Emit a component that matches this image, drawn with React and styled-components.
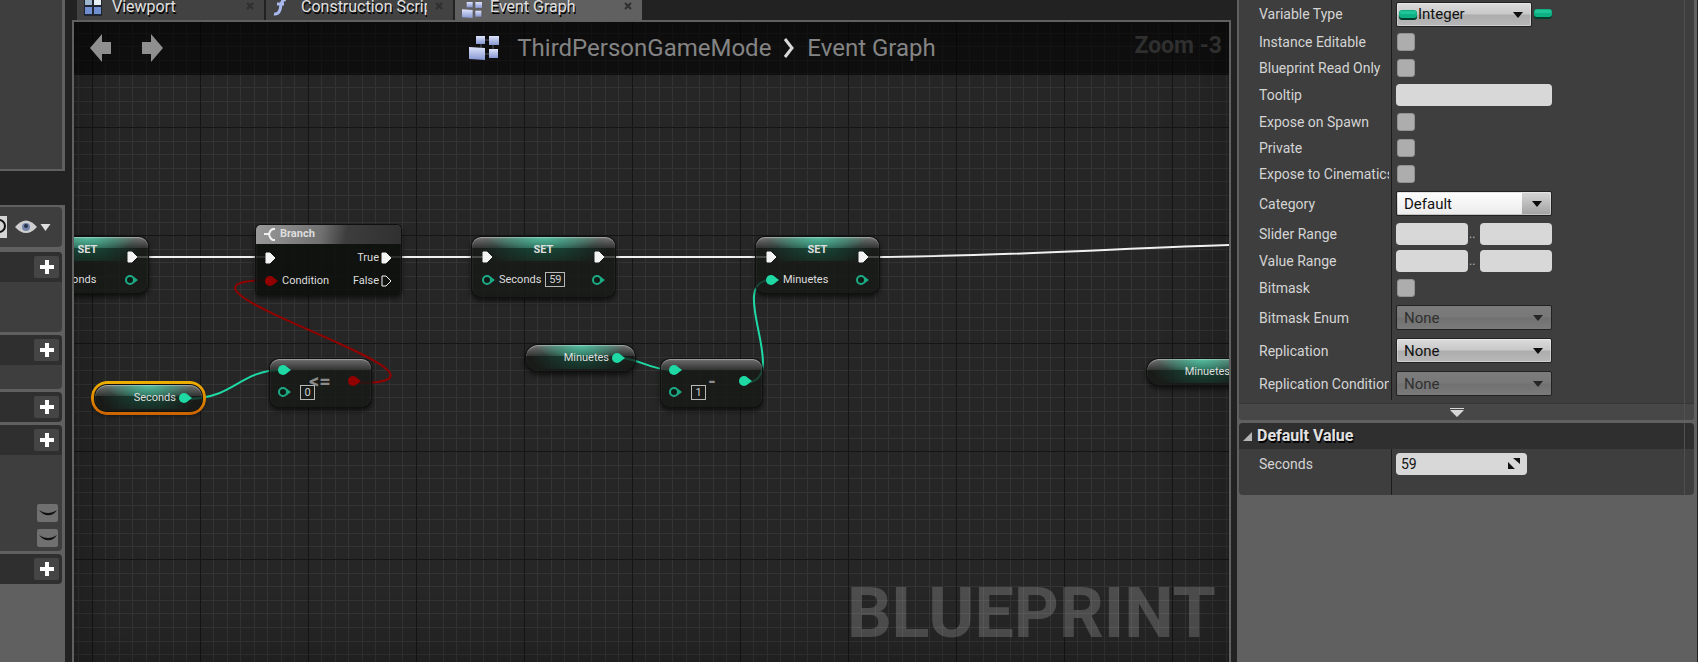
import React from "react";
import styled, { createGlobalStyle, css } from "styled-components";

const TEAL = "#1fd9a5";
const RED = "#920000";

const GlobalStyle = createGlobalStyle`
  *, *::before, *::after { box-sizing: border-box; }
  body {
    margin: 0;
    background: #222;
    font-family: Roboto, "Liberation Sans", sans-serif;
    overflow: hidden;
  }
  button, input, select { font: inherit; margin: 0; padding: 0; border: 0; outline: none; }
`;

const Editor = styled.div`
  display: flex;
  gap: 6px;
  height: 100vh;
  padding-right: 1px;
`;

/* ---------- left: variable / function list ---------- */

const Sidebar = styled.aside`
  flex: 0 0 65px;
  margin-right: 1px;
  display: flex;
  flex-direction: column;
  gap: 34px;
`;

const PreviewPane = styled.section`
  height: 171px;
  flex: none;
  border: solid #606060;
  border-width: 0 3px 2px 0;
  background: #3e3e3e;
`;

const ListPane = styled.section`
  flex: 1;
  padding: 2px 3px 0 0;
  background: #606060;
  display: flex;
  flex-direction: column;
  gap: 3px;
`;

const ListToolbar = styled.div`
  height: 40px;
  margin-bottom: 2px;
  flex: none;
  display: flex;
  align-items: center;
  background: #3e3e3e;
  border-radius: 0 4px 4px 0;
`;

const SearchCap = styled.button`
  width: 7px;
  height: 22px;
  margin-right: 8px;
  background: #d4d4d4;
  display: flex;
`;

const EyeButton = styled.button`
  background: none;
  display: flex;
  align-items: center;
  gap: 3px;
`;

const Group = styled.div`
  flex: none;
  background: #3e3e3e;
  border-radius: 0 4px 4px 0;
  overflow: hidden;
`;

const GroupHeader = styled.div`
  height: 30px;
  padding: 0 3px 1px 0;
  display: flex;
  align-items: center;
  justify-content: flex-end;
  background: #2f2f2f;
`;

const GroupBody = styled.div`
  height: ${(p) => p.$h}px;
  padding: 0 4px 4px 0;
  display: flex;
  flex-direction: column;
  justify-content: flex-end;
  align-items: flex-end;
  gap: 7px;
`;

const AddButton = styled.button`
  width: 25px;
  height: 22px;
  display: grid;
  place-items: center;
  background: #454545;
  border-radius: 2px;
`;

const LidButton = styled.button`
  width: 21px;
  height: 18px;
  display: grid;
  place-items: center;
  background: #707070;
  border-radius: 2px;
`;

/* ---------- centre: tabs and graph ---------- */

const GraphColumn = styled.main`
  flex: 1;
  min-width: 0;
  display: flex;
  flex-direction: column;
`;

const TabStrip = styled.nav`
  height: 20px;
  flex: none;
  padding-left: 5px;
  display: flex;
  gap: 2px;
  overflow: hidden;
`;

const Tab = styled.button`
  width: 187px;
  height: 20px;
  padding: 0 10px 0 7px;
  display: flex;
  align-items: center;
  gap: 8px;
  background: ${(p) => (p.$active ? "#606060" : "#424242")};
  color: #e0e0e0;
  font-size: 16px;
  text-align: left;
  text-shadow: 1px 2px 0 #000;
  svg { flex: none; }
`;

const TabLabel = styled.span`
  flex: 1;
  height: 20px;
  line-height: 14px;
  overflow: hidden;
  white-space: nowrap;
`;

const Canvas = styled.div`
  position: relative;
  flex: 1;
  overflow: hidden;
  border: 2px solid #606060;
  border-bottom: 0;
  background-color: #262626;
  background-image:
    linear-gradient(90deg, #151515 1px, transparent 1px),
    linear-gradient(#151515 1px, transparent 1px),
    linear-gradient(90deg, transparent 13px, #343434 13px 14px, transparent 14px 27px, #343434 27px 28px,
      transparent 28px 40px, #343434 40px 41px, transparent 41px 54px, #343434 54px 55px, transparent 55px 67px,
      #343434 67px 68px, transparent 68px 81px, #343434 81px 82px, transparent 82px 94px, #343434 94px 95px, transparent 95px),
    linear-gradient(transparent 14px, #343434 14px 15px, transparent 15px 27px, #343434 27px 28px,
      transparent 28px 41px, #343434 41px 42px, transparent 42px 54px, #343434 54px 55px, transparent 55px 68px,
      #343434 68px 69px, transparent 69px 82px, #343434 82px 83px, transparent 83px 95px, #343434 95px 96px, transparent 96px);
  background-size: 108px 108px;
  background-position: 18px 105px;
`;

const Vignette = styled.div`
  position: absolute;
  inset: 0;
  pointer-events: none;
  box-shadow: inset 0 0 60px rgba(0, 0, 0, 0.35);
`;

const TitleBar = styled.header`
  position: absolute;
  inset: 0 0 auto 0;
  height: 53px;
  padding: 0 7px 2px 16px;
  display: flex;
  align-items: center;
  background: rgba(0, 0, 0, 0.6);
`;

const History = styled.div`
  display: flex;
  gap: 31px;
  button { background: none; display: flex; }
`;

const Crumbs = styled.div`
  flex: 1;
  padding-left: 20px;
  display: flex;
  align-items: center;
  justify-content: center;
  gap: 12px;
  font-size: 24px;
  line-height: 28px;
  color: #848484;
`;

const CrumbLink = styled.a`
  color: inherit;
  text-decoration: none;
`;

const CrumbIcon = styled.span`
  display: flex;
  margin-right: 6px;
`;

const ZoomLabel = styled.div`
  position: absolute;
  right: 7px;
  top: 10px;
  font-size: 23px;
  line-height: 28px;
  font-weight: 700;
  color: #2f2f2f;
`;

const Watermark = styled.div`
  position: absolute;
  right: 13px;
  bottom: 8px;
  font-size: 70px;
  line-height: 82px;
  font-weight: 700;
  color: rgba(255, 255, 255, 0.18);
`;

const Wires = styled.svg`
  position: absolute;
  inset: 0;
  width: 100%;
  height: 100%;
`;

const tealGloss = css`
  background:
    radial-gradient(ellipse 40% 160% at 50% 0, rgba(85, 205, 170, 0.85), transparent) 0 0 / 100% 11px no-repeat,
    radial-gradient(ellipse 45% 100% at 50% 40%, rgba(22, 95, 72, 0.7), transparent) 0 0 / 100% 24px no-repeat,
    linear-gradient(rgba(140, 140, 140, 0.8), rgba(60, 60, 60, 0.7)) 0 0 / 100% 11px no-repeat,
    rgba(22, 24, 22, 0.78);
`;

const greyGloss = css`
  background:
    linear-gradient(rgba(130, 130, 130, 0.8), rgba(60, 60, 60, 0.7)) 0 0 / 100% 11px no-repeat,
    rgba(22, 24, 22, 0.78);
`;

const Node = styled.article`
  position: absolute;
  left: ${(p) => p.$x}px;
  top: ${(p) => p.$y}px;
  width: ${(p) => p.$w}px;
  height: ${(p) => p.$h}px;
  border-radius: ${(p) => (p.$pill ? 12 : 9)}px;
  ${(p) => (p.$teal ? tealGloss : greyGloss)}
  box-shadow: 0 0 0 1px #101010, inset 0 1px 1px rgba(255, 255, 255, 0.35), 0 3px 5px 1px rgba(0, 0, 0, 0.6);
  color: #dedede;
  font-size: 11px;
  line-height: 14px;
  ${(p) =>
    p.$selected &&
    css`
      &::before {
        content: "";
        position: absolute;
        inset: -4px;
        padding: 3px;
        border-radius: 16px;
        background: linear-gradient(#eeb000, #cc6200);
        mask: linear-gradient(#000 0 0) content-box exclude, linear-gradient(#000 0 0);
      }
    `}
`;

const BranchNode = styled(Node)`
  border-radius: 5px;
  overflow: hidden;
  background: rgba(14, 16, 12, 0.88);
`;

const BranchHeader = styled.div`
  height: 19px;
  margin-bottom: 2px;
  padding: 0 8px 1px;
  display: flex;
  align-items: center;
  gap: 4px;
  background: linear-gradient(100deg, #9a9a9a 0, #707070 45%, #3d3d3d 62%, #303030);
  font-weight: 700;
`;

const NodeTitle = styled.div`
  padding-top: 6px;
  margin-bottom: -12px;
  text-align: center;
  font-weight: 700;
`;

const PinRow = styled.div`
  display: flex;
  align-items: center;
  justify-content: space-between;
  height: 23px;
  padding: 0 ${(p) => p.$pad || 10}px;
`;

const PinGroup = styled.span`
  display: flex;
  align-items: center;
  gap: ${(p) => (p.$tight ? 2 : 4)}px;
  svg { flex: none; }
`;

const ValueBox = styled.input`
  width: ${(p) => p.$w}px;
  height: 15px;
  border: 1px solid #b8b8b8;
  background: transparent;
  color: #d0d0d0;
  text-align: center;
`;

const GetterBody = styled.div`
  height: 100%;
  padding-right: 10px;
  display: flex;
  align-items: center;
  justify-content: flex-end;
  gap: 3px;
  svg { flex: none; }
`;

const MathBody = styled.div`
  height: 100%;
  padding: 0 10px 4px 8px;
  display: flex;
  align-items: center;
  justify-content: space-between;
`;

const MathInputs = styled.div`
  width: 37px;
  height: 44px;
  display: flex;
  flex-direction: column;
`;

const MathRow = styled.div`
  height: 22px;
  display: flex;
  align-items: center;
  justify-content: space-between;
`;

const Operator = styled.span`
  flex: 1;
  margin-left: ${(p) => (p.$wide ? -6 : 2)}px;
  font-size: 20px;
  line-height: 24px;
  font-weight: 700;
  color: #8b8b8b;
  white-space: nowrap;
`;

/* ---------- right: details ---------- */

const Details = styled.aside`
  flex: 0 0 460px;
  padding: 0 3px 0 2px;
  background: #606060;
`;

const Card = styled.section`
  position: relative;
  background: #3e3e3e;
  border-radius: ${(p) => (p.$first ? "0 0 4px 4px" : "4px")};
  margin-bottom: 3px;
  overflow: hidden;
  &::after {
    content: "";
    position: absolute;
    top: 0;
    bottom: 0;
    right: 9px;
    width: 1px;
    background: #505050;
  }
`;

const Field = styled.div`
  display: grid;
  grid-template-columns: 152px 1fr;
  height: ${(p) => p.$h || 26}px;
`;

const FieldLabel = styled.label`
  padding-left: 20px;
  margin-right: 2px;
  align-self: center;
  overflow: hidden;
  white-space: nowrap;
  font-size: 14px;
  line-height: 18px;
  color: #d4d4d4;
`;

const FieldValue = styled.div`
  display: flex;
  align-items: center;
  border-left: 1px solid #1c1c1c;
  padding-left: 4px;
`;

const Check = styled.input.attrs({ type: "checkbox" })`
  appearance: none;
  width: 18px;
  height: 18px;
  margin-left: 1px;
  border: 1px solid #919191;
  border-radius: 3px;
  background: #adadad;
`;

const TextBox = styled.input.attrs({ type: "text" })`
  width: ${(p) => p.$w}px;
  height: 22px;
  padding: 0 5px;
  border-radius: 4px;
  background: #d8d8d8;
  font-size: 14px;
  color: #111;
`;

const Dots = styled.span`
  width: 12px;
  padding-left: 1px;
  font-size: 12px;
  line-height: 14px;
  color: #bbb;
`;

const SelectWrap = styled.div`
  position: relative;
  width: ${(p) => p.$w}px;
  height: 25px;
`;

const SelectArrow = styled.svg`
  position: absolute;
  right: ${(p) => (p.$inset ? 10 : 9)}px;
  top: 10px;
  pointer-events: none;
`;

const SelectPill = styled.span`
  position: absolute;
  left: 3px;
  top: 8px;
  display: flex;
  pointer-events: none;
`;

const TrailingPill = styled.span`
  display: flex;
  margin-left: 2px;
`;

const Select = styled.select`
  appearance: none;
  width: 100%;
  height: 25px;
  padding-left: ${(p) => p.$indent || 7}px;
  border: 1px solid #222;
  border-radius: 2px;
  font-size: 15px;
  color: #111;
  opacity: 1;
  background: ${(p) =>
    p.$editable
      ? "linear-gradient(#fdfdfd, #ececec) 1px 1px / 124px 21px no-repeat, linear-gradient(#d6d6d6, #a2a2a2)"
      : "linear-gradient(#dcdcdc, #c8c8c8 48%, #adadad 52%, #b8b8b8)"};
  box-shadow: inset 0 0 0 1px rgba(255, 255, 255, 0.35);
  &:disabled {
    color: #303030;
    background: linear-gradient(#7c7c7c, #787878 48%, #717171 52%, #7a7a7a);
    box-shadow: none;
  }
`;

const Expander = styled.button`
  width: 100%;
  height: 17px;
  margin-top: 3px;
  display: grid;
  place-items: center;
  padding-right: 20px;
  border-top: 1px solid #363636;
  background: #474747;
`;

const CardHeader = styled.h2`
  margin: 0;
  height: 26px;
  padding-left: 4px;
  display: flex;
  align-items: center;
  gap: 5px;
  background: #2f2f2f;
  color: #e2e2e2;
  font-size: 16px;
  line-height: 18px;
  font-weight: 700;
  text-shadow: 1px 2px 0 #000;
`;

const SpinWrap = styled.div`
  position: relative;
  display: flex;
  svg { position: absolute; right: 7px; top: 5px; pointer-events: none; }
`;

/* ---------- drawings ---------- */

const Plus = () => (
  <svg width="14" height="14" viewBox="0 0 14 14"><path d="M5 0h4v5h5v4H9v5H5V9H0V5h5z" fill="#fff" /></svg>
);
const Lid = () => (
  <svg width="18" height="8" viewBox="0 0 18 8"><path d="M0 1C6 5 12 5 18 1C14 8 5 8 0 1z" fill="#111" /></svg>
);
const Caret = ({ color = "#0c0c0c", inset }) => (
  <SelectArrow $inset={inset} width="10" height="6" viewBox="0 0 10 6"><path d="M0 0h10L5 6z" fill={color} /></SelectArrow>
);
const IntPill = () => (
  <svg width="18" height="10" viewBox="0 0 18 10">
    <rect y="1" width="18" height="9" rx="3" fill="#043d2c" />
    <rect width="18" height="8" rx="3" fill="#0fb184" />
    <rect x="1" y="1" width="16" height="3" rx="1" fill="#1fc598" />
  </svg>
);
const Exec = ({ hollow }) => (
  <svg width="11" height="12" viewBox="0 0 11 12">
    <path d="M1 1h4l5 5-5 5H1z" fill={hollow ? "none" : "#f4f4f4"} stroke="#f4f4f4" strokeLinejoin="round" />
  </svg>
);
const Dot = ({ color = TEAL, hollow }) => (
  <svg width="13" height="10" viewBox="0 0 13 10">
    <path d="M9 2L13 5L9 8z" fill={hollow ? "#1cab84" : color} />
    <circle cx="5" cy="5" r={hollow ? 4 : 5} fill={hollow ? "#101a17" : color} stroke={hollow ? "#1cab84" : "none"} strokeWidth="2" />
  </svg>
);
const ArrowIcon = ({ flip }) => (
  <svg width="21" height="28" viewBox="0 0 21 28">
    <path d={flip ? "M0 8h9V0l12 14L9 28v-8H0z" : "M21 8h-9V0L0 14l12 14v-8h9z"} fill="#8f8f8f" />
  </svg>
);
const GraphIcon = ({ size }) => (
  <svg width={size} height={size} viewBox="0 0 30 26">
    <defs>
      <linearGradient id="tile" x1="0" y1="0" x2="0" y2="1">
        <stop offset="0" stopColor="#dde4fb" /><stop offset="1" stopColor="#8796d2" />
      </linearGradient>
    </defs>
    <path d="M12 5h12v14H12z" fill="none" stroke="#556" />
    <g fill="url(#tile)">
      <rect x="7" y="1" width="9" height="8" /><rect x="20" y="1" width="10" height="9" />
      <path d="M0 12l16 1v12l-16-1z" /><rect x="20" y="14" width="9" height="9" />
    </g>
  </svg>
);
const ViewportIcon = () => (
  <svg width="20" height="20" viewBox="0 0 20 20">
    <rect width="18" height="18" y="-2" fill="#20262f" />
    <rect x="1" y="-2" width="7" height="7" fill="#9fb6cf" /><rect x="10" y="-2" width="7" height="7" fill="#e8f2f6" />
    <rect x="1" y="7" width="7" height="7" fill="#6f8fd0" /><rect x="10" y="7" width="7" height="7" fill="#6f8fd0" />
  </svg>
);
const FunctionIcon = () => (
  <svg width="20" height="20" viewBox="0 0 20 20">
    <path d="M13 0Q9-1 8 5Q7 15 1 14M4 4h7" fill="none" stroke="#a9b8ee" strokeWidth="3" />
  </svg>
);
const CloseIcon = () => (
  <svg width="8" height="20" viewBox="0 0 8 20"><path d="M1 3l6 6M7 3L1 9" stroke="#2f2f2f" strokeWidth="2" /></svg>
);
const BranchIcon = () => (
  <svg width="12" height="13" viewBox="0 0 12 13">
    <path d="M11 1H9Q6 2 5 6Q6 11 9 12h2M0 6h5" fill="none" stroke="#f0f0f0" strokeWidth="2" />
  </svg>
);

/* ---------- parts ---------- */

const ListGroup = ({ name, body = 0, children }) => (
  <Group>
    <GroupHeader><AddButton aria-label={`Add ${name}`}><Plus /></AddButton></GroupHeader>
    {body > 0 && <GroupBody $h={body}>{children}</GroupBody>}
  </Group>
);

const SetNode = ({ x, w, h = 56, label, value, linked }) => (
  <Node $x={x} $y={215} $w={w} $h={h} $teal>
    <NodeTitle>SET</NodeTitle>
    <PinRow><Exec /><Exec /></PinRow>
    <PinRow>
      <PinGroup><Dot hollow={!linked} />{label}{value && <ValueBox $w={20} defaultValue={value} aria-label={label} />}</PinGroup>
      <Dot hollow />
    </PinRow>
  </Node>
);

const GetNode = ({ x, y, w, label, selected }) => (
  <Node $x={x} $y={y} $w={w} $h={26} $teal $pill $selected={selected}>
    <GetterBody>{label}<Dot /></GetterBody>
  </Node>
);

const MathNode = ({ x, y, op, value, out }) => (
  <Node $x={x} $y={y} $w={101} $h={48}>
    <MathBody>
      <MathInputs>
        <MathRow><Dot /></MathRow>
        <MathRow><Dot hollow /><ValueBox $w={15} defaultValue={value} aria-label={`Operand of ${op}`} /></MathRow>
      </MathInputs>
      <Operator $wide={op.length > 1}>{op}</Operator>
      <Dot color={out} />
    </MathBody>
  </Node>
);

const Row = ({ id, label, h, children }) => (
  <Field $h={h}>
    <FieldLabel htmlFor={id}>{label}</FieldLabel>
    <FieldValue>{children}</FieldValue>
  </Field>
);

const Combo = ({ id, value, w = 156, disabled, editable, pill }) => (
  <SelectWrap $w={w}>
    <Select id={id} disabled={disabled} $editable={editable} $indent={pill && 21} defaultValue={value}>
      <option>{value}</option>
    </Select>
    {pill && <SelectPill><IntPill /></SelectPill>}
    <Caret color={disabled ? "#262626" : undefined} inset={editable} />
  </SelectWrap>
);

export default function App() {
  return (
    <>
      <GlobalStyle />
      <Editor>
        <Sidebar>
          <PreviewPane />
          <ListPane>
            <ListToolbar>
              <SearchCap aria-label="Search">
                <svg width="7" height="22" viewBox="0 0 7 22"><circle cx="-1" cy="10" r="6" fill="none" stroke="#111" strokeWidth="2" /></svg>
              </SearchCap>
              <EyeButton aria-label="View options">
                <svg width="22" height="14" viewBox="0 0 22 14">
                  <path d="M0 7Q11-6 22 7Q11 19 0 7z" fill="#cfcfcf" />
                  <circle cx="11" cy="7" r="4" fill="#7384a8" /><circle cx="11" cy="6" r="2" fill="#26324a" />
                </svg>
                <svg width="11" height="7" viewBox="0 0 10 7"><path d="M0 0h10L5 7z" fill="#e0e0e0" /></svg>
              </EyeButton>
            </ListToolbar>
            <ListGroup name="graph" body={50} />
            <ListGroup name="function" body={24} />
            <ListGroup name="macro" />
            <ListGroup name="variable" body={96}>
              <LidButton aria-label="Toggle visibility of Seconds"><Lid /></LidButton>
              <LidButton aria-label="Toggle visibility of Minuetes"><Lid /></LidButton>
            </ListGroup>
            <ListGroup name="event dispatcher" />
          </ListPane>
        </Sidebar>

        <GraphColumn>
          <TabStrip>
            <Tab><ViewportIcon /><TabLabel>Viewport</TabLabel><CloseIcon /></Tab>
            <Tab><FunctionIcon /><TabLabel>Construction Script</TabLabel><CloseIcon /></Tab>
            <Tab $active><GraphIcon size={20} /><TabLabel>Event Graph</TabLabel><CloseIcon /></Tab>
          </TabStrip>
          <Canvas>
            <Vignette />
            <Watermark>BLUEPRINT</Watermark>
            <Wires fill="none" strokeWidth="2">
              <g stroke="#f0f0f0">
                <path d="M60 235H195M315 235H413M530 235H697M793 235C915 235 1006 228 1155 223" />
              </g>
              <g stroke={TEAL}>
                <path d="M113 377C160 377 165 348 208 348M545 336C565 336 575 348 598 348M670 361C720 361 650 258 697 258" />
              </g>
              <path stroke={RED} d="M283 361C428 361 48 258 196 258" />
            </Wires>

            <SetNode x={-47} w={121} label="Seconds" />
            <BranchNode $x={182} $y={203} $w={145} $h={69}>
              <BranchHeader><BranchIcon />Branch</BranchHeader>
              <PinRow $pad={9}><Exec /><PinGroup $tight>True<Exec /></PinGroup></PinRow>
              <PinRow $pad={9}>
                <PinGroup><Dot color={RED} />Condition</PinGroup>
                <PinGroup $tight>False<Exec hollow /></PinGroup>
              </PinRow>
            </BranchNode>
            <SetNode x={398} w={143} h={60} label="Seconds" value="59" />
            <SetNode x={682} w={123} label="Minuetes" linked />
            <GetNode x={21} y={363} w={107} label="Seconds" selected />
            <MathNode x={196} y={337} op="<=" value="0" out={RED} />
            <GetNode x={452} y={323} w={109} label="Minuetes" />
            <MathNode x={587} y={337} op="-" value="1" out={TEAL} />
            <GetNode x={1073} y={337} w={109} label="Minuetes" />

            <TitleBar>
              <History>
                <button aria-label="Back"><ArrowIcon /></button>
                <button aria-label="Forward"><ArrowIcon flip /></button>
              </History>
              <Crumbs>
                <CrumbIcon><GraphIcon size={30} /></CrumbIcon>
                <CrumbLink href="#blueprint">ThirdPersonGameMode</CrumbLink>
                <svg width="12" height="20" viewBox="0 0 12 20"><path d="M2 1l7 9-7 9" fill="none" stroke="#d8d8d8" strokeWidth="3" /></svg>
                <CrumbLink href="#graph">Event Graph</CrumbLink>
              </Crumbs>
              <ZoomLabel>Zoom -3</ZoomLabel>
            </TitleBar>
          </Canvas>
        </GraphColumn>

        <Details>
          <Card $first>
            <Row id="type" label="Variable Type" h={28}>
              <Combo id="type" value="Integer" w={136} pill />
              <TrailingPill><IntPill /></TrailingPill>
            </Row>
            <Row id="editable" label="Instance Editable" h={27}><Check id="editable" /></Row>
            <Row id="readonly" label="Blueprint Read Only"><Check id="readonly" /></Row>
            <Row id="tooltip" label="Tooltip" h={28}><TextBox id="tooltip" $w={156} /></Row>
            <Row id="spawn" label="Expose on Spawn"><Check id="spawn" /></Row>
            <Row id="private" label="Private"><Check id="private" /></Row>
            <Row id="cinematics" label="Expose to Cinematics"><Check id="cinematics" /></Row>
            <Row id="category" label="Category" h={33}><Combo id="category" value="Default" editable /></Row>
            <Row id="slider" label="Slider Range" h={27}>
              <TextBox id="slider" $w={72} /><Dots>..</Dots><TextBox aria-label="Slider range maximum" $w={72} />
            </Row>
            <Row id="range" label="Value Range" h={27}>
              <TextBox id="range" $w={72} /><Dots>..</Dots><TextBox aria-label="Value range maximum" $w={72} />
            </Row>
            <Row id="bitmask" label="Bitmask" h={27}><Check id="bitmask" /></Row>
            <Row id="enum" label="Bitmask Enum" h={33}><Combo id="enum" value="None" disabled /></Row>
            <Row id="replication" label="Replication" h={33}><Combo id="replication" value="None" /></Row>
            <Row id="condition" label="Replication Condition" h={33}><Combo id="condition" value="None" disabled /></Row>
            <Expander aria-label="Show advanced">
              <svg width="14" height="9" viewBox="0 0 14 9"><path d="M0 0h14v1H0zM0 2h14L7 9z" fill="#d8d8d8" /></svg>
            </Expander>
          </Card>
          <Card>
            <CardHeader>
              <svg width="9" height="9" viewBox="0 0 9 9"><path d="M9 0v9H0z" fill="#b5b5b5" /></svg>
              Default Value
            </CardHeader>
            <Row id="seconds" label="Seconds" h={30}>
              <SpinWrap>
                <TextBox id="seconds" $w={131} defaultValue="59" />
                <svg width="12" height="11" viewBox="0 0 12 11"><path d="M5 0h7v6zM0 4l7 7H0z" fill="#111" /></svg>
              </SpinWrap>
            </Row>
            <Row h={16} />
          </Card>
        </Details>
      </Editor>
    </>
  );
}
